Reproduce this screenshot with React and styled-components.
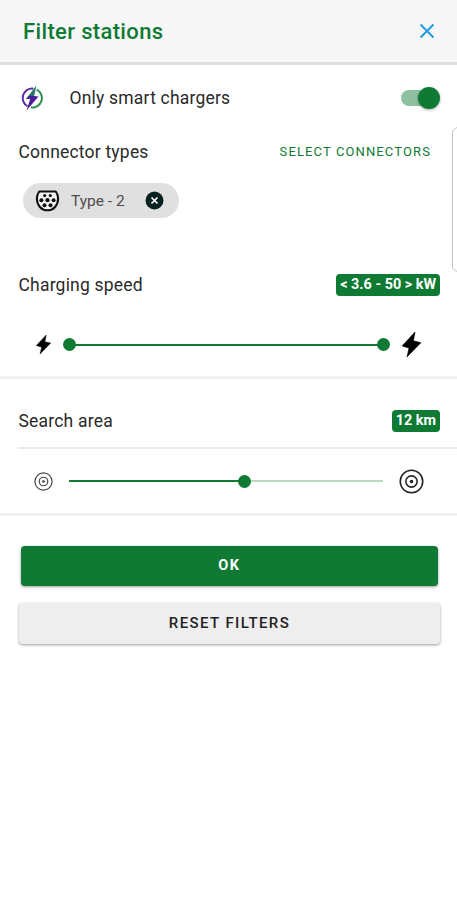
import React, { useState } from "react";
import styled, { createGlobalStyle } from "styled-components";

const green = "#0f7a33";

const GlobalStyle = createGlobalStyle`
  * {
    box-sizing: border-box;
  }
  body {
    margin: 0;
    background: #fff;
    font-family: Roboto, "Liberation Sans", sans-serif;
    color: #2a2a2a;
  }
  button {
    font-family: inherit;
    border: 0;
    padding: 0;
    background: none;
  }
`

const Page = styled.main`
  position: relative;
  width: 100%;
  height: 900px;
  overflow: hidden;
`
const Header = styled.header`
  height: 65px;
  padding: 0 22px 0 23px;
  display: flex;
  align-items: center;
  justify-content: space-between;
  background: #f7f7f7;
  border-bottom: 3px solid #dedede;
  h1 {
    margin: 0;
    font-size: 22px;
    font-weight: 500;
    letter-spacing: 0.35px;
    color: ${green};
  }
  button {
    display: flex;
  }
`
const Row = styled.div`
  height: ${props => props.$height}px;
  padding: ${props => props.$top || 0}px 17px 0 18.5px;
  display: flex;
  align-items: center;
  justify-content: space-between;
`
const Label = styled.span`
  font-size: 17.5px;
  font-weight: 370;
  line-height: 24px;
  letter-spacing: 0.2px;
  white-space: nowrap;
`
const SmartLabel = styled.div`
  display: flex;
  align-items: center;
  svg {
    margin: 0 24px 0 -1px;
  }
`
const Toggle = styled.button`
  position: relative;
  width: 39px;
  height: 24px;
  display: flex;
  align-items: center;
  justify-content: ${props => (props.$on ? "flex-end" : "flex-start")};
  &::before {
    content: "";
    position: absolute;
    left: 0;
    width: 34px;
    height: 16px;
    border-radius: 8px;
    background: #8fc0a0;
  }
  span {
    position: relative;
    width: 22px;
    height: 22px;
    border-radius: 50%;
    background: ${green};
    box-shadow: 0 1px 3px rgba(0, 0, 0, 0.35);
  }
`
const TextButton = styled.button`
  margin-right: 9px;
  font-size: 13px;
  font-weight: 450;
  letter-spacing: 1.12px;
  color: ${green};
`
const Chips = styled.div`
  height: 85px;
  padding: 11px 23px 0;
  display: flex;
  align-items: flex-start;
`
const Chip = styled.div`
  width: 156px;
  height: 35px;
  padding: 0 15px 0 12px;
  display: flex;
  align-items: center;
  border-radius: 18px;
  background: #e0e0e0;
  color: #4c4c4c;
  span {
    flex: 1;
    margin-left: 11px;
    font-size: 15.5px;
    font-weight: 370;
    letter-spacing: 0;
  }
`
const Badge = styled.span`
  height: 22px;
  padding: 0 4px;
  border-radius: 4px;
  background: ${green};
  color: #fff;
  font-size: 14.4px;
  font-weight: 700;
  line-height: 21px;
  white-space: nowrap;
`
const SliderRow = styled.div`
  height: ${props => props.$height}px;
  padding: 0 0 0 31px;
  display: grid;
  grid-template-columns: 26px 314px 26px;
  column-gap: 12px;
  align-items: center;
  justify-items: center;
  border-bottom: 3px solid #f1f1f1;
  svg:first-child {
    margin-right: 1px;
  }
  svg:last-child {
    margin-left: 6px;
  }
`
const Track = styled.div`
  width: 100%;
  height: 13px;
  display: flex;
  align-items: center;
`
const Bar = styled.div`
  height: 2px;
  background: ${props => (props.$active ? green : "#b7dbc1")};
`
const Knob = styled.div`
  flex: none;
  width: 13px;
  height: 13px;
  margin: 0 -6.5px;
  border-radius: 50%;
  background: ${green};
  z-index: 1;
`
const Divider = styled.hr`
  height: 2px;
  margin: 0 0 0 18px;
  border: 0;
  background: #ebebeb;
`
const Actions = styled.div`
  padding: 29.5px 17px 0 19px;
  display: flex;
  flex-direction: column;
  gap: 17px;
`
const Action = styled.button`
  height: ${props => (props.$primary ? 40.5 : 41)}px;
  margin: ${props => (props.$primary ? "0 2px 0 1.5px" : 0)};
  border-radius: 4px;
  background: ${props => (props.$primary ? green : "#eee")};
  color: ${props => (props.$primary ? "#fff" : "#222")};
  font-size: ${props => (props.$primary ? 14.5 : 15)}px;
  font-weight: ${props => (props.$primary ? 700 : 470)};
  letter-spacing: 1.4px;
  line-height: 39px;
  box-shadow: 0 1px 3px rgba(0, 0, 0, 0.4);
`
// edge of the sheet that peeks in from the right
const SideHandle = styled.div`
  position: absolute;
  top: 127px;
  right: -10px;
  width: 15px;
  height: 145px;
  border: 1.5px solid #c4c4c4;
  border-radius: 6px;
`

const CloseIcon = () => (
  <svg width="16" height="16" viewBox="0 0 16 16">
    <path d="M1.5 1.5l13 13M14.5 1.5l-13 13" stroke="#209be2" strokeWidth="1.9" fill="none" />
  </svg>
)

const SmartIcon = () => (
  <svg width="28" height="28" viewBox="0 0 28 28">
    <path d="M15.5 4.7A9.4 9.4 0 0 0 9.5 22.2" stroke="#5b2fa8" strokeWidth="2" fill="none" />
    <path d="M18.7 5.6A9.4 9.4 0 0 1 13 23.3" stroke="#2b9150" strokeWidth="2" fill="none" />
    <path d="M18.5 1.5L8 14.8h6.5l2-4z" fill="#2a7a68" />
    <path d="M8 14.8l4-3.4 8.5 1.1L8.5 26.5l3.8-11.7z" fill="#4a1c9c" />
  </svg>
)

const PlugIcon = () => (
  <svg width="25" height="22" viewBox="0 0 25 22">
    <path
      d="M4.2 1.5h16.6c1.4 2 2.3 4.3 2.3 7.1 0 6.6-4.5 11.7-10.6 11.7S1.9 15.2 1.9 8.6c0-2.8.9-5.1 2.3-7.1z"
      fill="#f4f4f4" stroke="#111" strokeWidth="2.1" strokeLinejoin="round" />
    <g fill="#111">
      <circle cx="9.7" cy="5.6" r="1.6" />
      <circle cx="15.3" cy="5.6" r="1.6" />
      <circle cx="6.4" cy="10.2" r="2" />
      <circle cx="12.5" cy="10.2" r="2.1" />
      <circle cx="18.6" cy="10.2" r="2" />
      <circle cx="9.5" cy="15.2" r="2" />
      <circle cx="15.5" cy="15.2" r="2" />
    </g>
  </svg>
)

const RemoveIcon = () => (
  <svg width="19" height="19" viewBox="0 0 19 19">
    <circle cx="9.5" cy="9.5" r="9" fill="#08201f" />
    <path d="M6.5 6.5l6 6M12.5 6.5l-6 6" stroke="#fff" strokeWidth="1.7" />
  </svg>
)

const BoltIcon = ({ size }) => (
  <svg width={size} height={size} viewBox="0 0 24 24">
    <path d="M15.4 0L3 13.4l6.6 2L7.7 24 21 10.2l-7.2-1.7z" fill="#000" stroke="#000" strokeWidth=".6" strokeLinejoin="round" />
  </svg>
)

const TargetIcon = ({ size, color }) => (
  <svg width={size} height={size} viewBox="0 0 24 24" fill="none" stroke={color} strokeWidth="1.5">
    <circle cx="12" cy="12" r="10.8" />
    <circle cx="12" cy="12" r="5.4" />
    <circle cx="12" cy="12" r="1.7" fill={color} stroke="none" />
  </svg>
)

const App = () => {

  const [smart, setSmart] = useState(true)
  const area = 56

  return (
    <>
      <GlobalStyle />
      <Page>
        <Header>
          <h1>Filter stations</h1>
          <button aria-label="Close"><CloseIcon /></button>
        </Header>
        <Row $height={66}>
          <SmartLabel>
            <SmartIcon />
            <Label>Only smart chargers</Label>
          </SmartLabel>
          <Toggle $on={smart} onClick={() => setSmart(!smart)} aria-label="Only smart chargers"><span /></Toggle>
        </Row>
        <Row $height={41}>
          <Label>Connector types</Label>
          <TextButton>SELECT CONNECTORS</TextButton>
        </Row>
        <Chips>
          <Chip>
            <PlugIcon />
            <span>Type - 2</span>
            <RemoveIcon />
          </Chip>
        </Chips>
        <Row $height={56}>
          <Label>Charging speed</Label>
          <Badge>&lt; 3.6 - 50 &gt; kW</Badge>
        </Row>
        <SliderRow $height={66}>
          <BoltIcon size={19} />
          <Track>
            <Knob />
            <Bar $active style={{ width: "100%" }} />
            <Knob />
          </Track>
          <BoltIcon size={25} />
        </SliderRow>
        <Row $height={68} $top={16}>
          <Label>Search area</Label>
          <Badge>12 km</Badge>
        </Row>
        <Divider />
        <SliderRow $height={67}>
          <TargetIcon size={19} color="#444" />
          <Track>
            <Bar $active style={{ width: `${area}%` }} />
            <Knob />
            <Bar style={{ width: `${100 - area}%` }} />
          </Track>
          <TargetIcon size={25} color="#222" />
        </SliderRow>
        <Actions>
          <Action $primary>OK</Action>
          <Action>RESET FILTERS</Action>
        </Actions>
        <SideHandle />
      </Page>
    </>
  )
}

export default App;
